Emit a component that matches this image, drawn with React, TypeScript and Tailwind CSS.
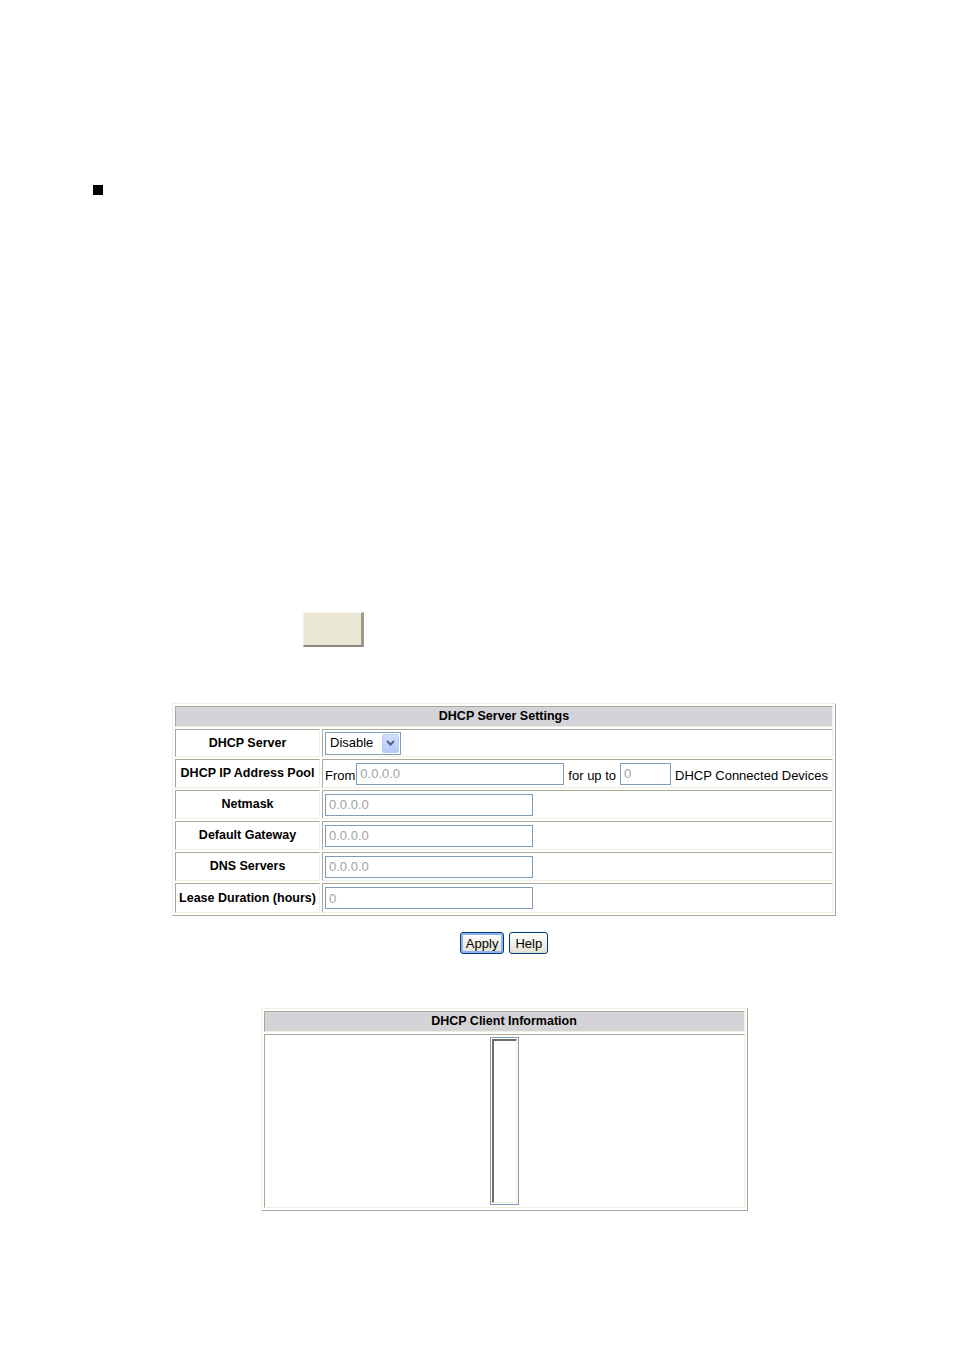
import React from "react";

const cell =
  "border border-t-[#aca899] border-l-[#aca899] border-b-[#f1efe2] border-r-[#f1efe2] p-0";

function IpInput({ value, w = "w-[208px]" }: { value: string; w?: string }) {
  return (
    <div
      className={`${w} h-[22px] border border-[#7f9db9] bg-white flex items-center px-[3px] text-[13px] text-[#a3a3a3] leading-none`}
    >
      {value}
    </div>
  );
}

function LabelCell({ children, h }: { children: React.ReactNode; h: string }) {
  return (
    <td className={`${cell} ${h} w-[145px] text-center font-bold text-[12.5px] text-black whitespace-nowrap`}>
      {children}
    </td>
  );
}

function XpButton({ label, focused }: { label: string; focused?: boolean }) {
  return (
    <button
      className={`h-[22px] px-[5px] rounded-[3px] border border-[#003c74] bg-gradient-to-b from-white to-[#e3e0d2] text-[13px] text-black leading-none ${
        focused ? "shadow-[inset_0_0_0_2px_#8fb2ef]" : ""
      }`}
    >
      {label}
    </button>
  );
}

export default function App() {
  return (
    <div
      className="w-[954px] h-[1351px] bg-white overflow-hidden"
      style={{ fontFamily: '"Liberation Sans", Arial, sans-serif' }}
    >
      {/* bullet */}
      <div className="pt-[185px] pl-[93px]">
        <div className="w-[10px] h-[10px] bg-black" />
      </div>

      {/* beige placeholder button */}
      <div className="pt-[417px] pl-[303px]">
        <div className="w-[61px] h-[35px] bg-[#ebe7d6] border-t border-l border-t-[#f4f2e8] border-l-[#f4f2e8] border-r-[3px] border-b-[2px] border-r-[#9d9a8a] border-b-[#8a877a]" />
      </div>

      <div className="ml-[54px] w-[900px] flex flex-col items-center">
        {/* DHCP Server Settings */}
        <table className="mt-[56px] border-separate border-spacing-[2px] border border-t-[#f1efe2] border-l-[#f1efe2] border-b-[#aca899] border-r-[#aca899] w-[664px]">
          <tbody>
            <tr>
              <td
                colSpan={2}
                className={`${cell} h-[21px] bg-[#d4d3d8] text-center font-bold text-[12.5px]`}
              >
                DHCP Server Settings
              </td>
            </tr>
            <tr>
              <LabelCell h="h-[28px]">DHCP Server</LabelCell>
              <td className={`${cell} pl-[2px]`}>
                <div className="w-[76px] h-[23px] border border-[#7f9db9] bg-white flex items-center justify-between pl-[4px] pr-[1px] text-[13px]">
                  <span>Disable</span>
                  <span className="w-[17px] h-[19px] rounded-[2px] bg-gradient-to-b from-[#d3defc] to-[#b5c8f7] border border-[#b9cdf9] flex items-center justify-center">
                    <svg width="9" height="6" viewBox="0 0 9 6">
                      <path d="M1 1 L4.5 4.5 L8 1" fill="none" stroke="#4d6185" strokeWidth="2" />
                    </svg>
                  </span>
                </div>
              </td>
            </tr>
            <tr>
              <LabelCell h="h-[29px]">DHCP IP Address Pool</LabelCell>
              <td className={`${cell} pl-[2px]`}>
                <div className="flex items-center text-[13px] whitespace-nowrap">
                  <span className="pt-[4px]">From</span>
                  <span className="ml-[1px]">
                    <IpInput value="0.0.0.0" />
                  </span>
                  <span className="ml-[4px] pt-[4px]">for up to</span>
                  <span className="ml-[4px]">
                    <IpInput value="0" w="w-[51px]" />
                  </span>
                  <span className="ml-[4px] pt-[4px]">DHCP Connected Devices</span>
                </div>
              </td>
            </tr>
            {[
              { l: "Netmask", v: "0.0.0.0", h: "h-[29px]" },
              { l: "Default Gateway", v: "0.0.0.0", h: "h-[29px]" },
              { l: "DNS Servers", v: "0.0.0.0", h: "h-[29px]" },
              { l: "Lease Duration (hours)", v: "0", h: "h-[30px]" },
            ].map((r) => (
              <tr key={r.l}>
                <LabelCell h={r.h}>{r.l}</LabelCell>
                <td className={`${cell} pl-[2px]`}>
                  <IpInput value={r.v} />
                </td>
              </tr>
            ))}
          </tbody>
        </table>

        <div className="mt-[16px] flex gap-[5px]">
          <XpButton label="Apply" focused />
          <XpButton label="Help" />
        </div>

        {/* DHCP Client Information */}
        <table className="mt-[54px] border-separate border-spacing-[2px] border border-t-[#f1efe2] border-l-[#f1efe2] border-b-[#aca899] border-r-[#aca899] w-[487px]">
          <tbody>
            <tr>
              <td className={`${cell} h-[20px] bg-[#d4d3d8] text-center font-bold text-[12.5px]`}>
                DHCP Client Information
              </td>
            </tr>
            <tr>
              <td className={`${cell} h-[174px] align-middle`}>
                <div className="flex justify-center">
                  <div className="w-[29px] h-[168px] border border-[#7f9db9] bg-white p-[1px]">
                    <div className="w-full h-full border-t-2 border-l-2 border-t-[#716f64] border-l-[#716f64] border-r border-b border-r-[#f1efe2] border-b-[#f1efe2]" />
                  </div>
                </div>
              </td>
            </tr>
          </tbody>
        </table>
      </div>
    </div>
  );
}
